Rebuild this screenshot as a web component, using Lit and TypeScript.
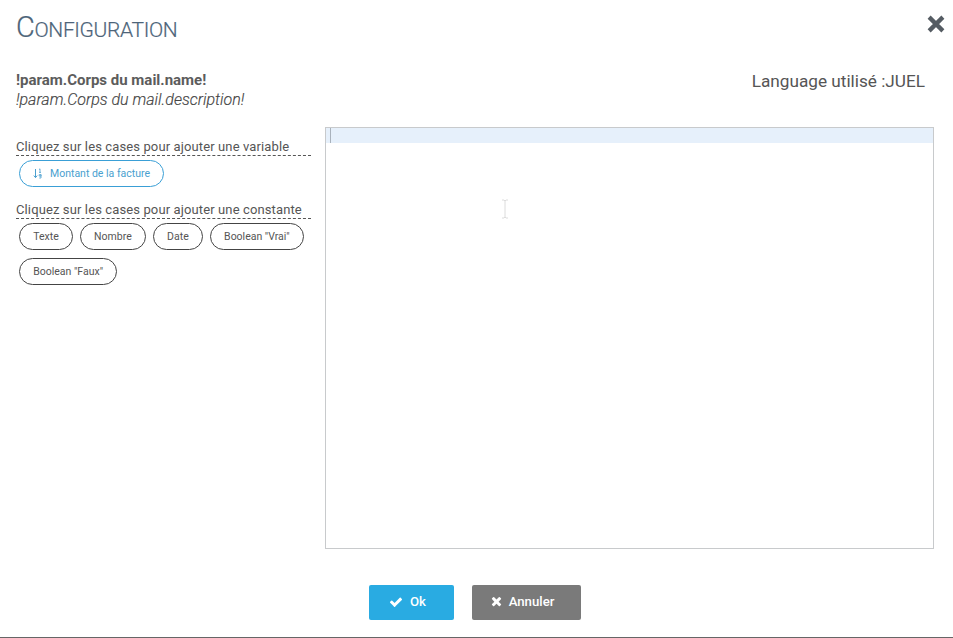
import { LitElement, html, css } from "lit";
import { customElement } from "lit/decorators.js";

@customElement("app-root")
export class AppRoot extends LitElement {
  static styles = css`
    :host {
      display: block;
      width: 953px;
      height: 638px;
      background: #fff;
      font-family: Roboto, "Liberation Sans", sans-serif;
      color: #555;
      overflow: hidden;
    }
    .dialog {
      box-sizing: border-box;
      height: 638px;
      display: flex;
      flex-direction: column;
      border-bottom: 1px solid #666;
    }
    .head {
      display: flex;
      justify-content: space-between;
      align-items: flex-start;
      padding: 11px 7px 0 16px;
      height: 60px;
      box-sizing: border-box;
    }
    .title {
      margin: 0;
      font-size: 21px;
      line-height: 32px;
      font-weight: 300;
      letter-spacing: -0.36px;
      color: #4d6479;
      text-transform: uppercase;
      -webkit-text-stroke: 0.2px #4d6479;
    }
    .title .cap { font-size: 29px; }
    .close { margin: 3px 0 0 0; display: block; }
    .info {
      display: flex;
      justify-content: space-between;
      align-items: flex-start;
      padding: 0 28px 0 16px;
      height: 67px;
      box-sizing: border-box;
    }
    .name { font-size: 15px; font-weight: 700; line-height: 20px; margin-top: 10px; color: #5c5c5c; }
    .desc { font-size: 16px; font-style: italic; font-weight: 300; line-height: 20px; color: #444; -webkit-text-stroke: 0.15px #444; }
    .lang { font-size: 17.2px; line-height: 22px; margin-top: 10px; color: #555; }
    .body {
      display: grid;
      grid-template-columns: 295px 609px;
      column-gap: 14px;
      padding-left: 16px;
    }
    .label {
      font-size: 13px;
      line-height: 17px;
      height: 17px;
      letter-spacing: 0.12px;
      color: #555;
      border-bottom: 1px dashed #555;
      margin: 0;
      padding-top: 11px;
    }
    .label.second { padding-top: 0; margin-top: 14px; }
    .chips {
      display: flex;
      flex-wrap: wrap;
      gap: 8px 7px;
      padding: 4px 0 0 3px;
    }
    .chip {
      box-sizing: border-box;
      height: 27px;
      padding: 0 13.2px;
      border: 1px solid #444;
      border-radius: 14px;
      background: #fff;
      font: 400 10.5px Roboto, sans-serif;
      color: #555;
      display: inline-flex;
      align-items: center;
      gap: 7px;
    }
    .chip.var { border-color: #3a9fd6; color: #4a9fcf; padding: 0 13px; }
    .editor {
      box-sizing: border-box;
      height: 422px;
      margin-top: 0;
      border: 1px solid #c8cacc;
      position: relative;
    }
    .active {
      height: 15px;
      background: #e6f0fb;
      display: flex;
      padding-left: 4px;
    }
    .caret { width: 1px; height: 15px; background: #a9b2bc; }
    .ibeam { position: absolute; left: 175px; top: 71px; display: block; }
    .foot {
      display: flex;
      justify-content: center;
      gap: 18px;
      padding: 36px 0 0 0;
      margin-left: -3px;
    }
    .btn {
      box-sizing: border-box;
      height: 35px;
      border: 0;
      border-radius: 2px;
      color: #fff;
      font: 500 13.2px Roboto, sans-serif;
      display: inline-flex;
      align-items: center;
      justify-content: center;
      gap: 7px;
      padding: 0 8px 2px 0;
    }
    .ok { width: 85px; background: #29abe2; }
    .cancel { width: 109px; background: #7a7a7a; }
  `;

  private x(size: number, color: string) {
    return html`<svg class="close" width=${size} height=${size} viewBox="0 0 16 16" aria-hidden="true"><path d="M2.5 2.5 13.5 13.5M13.5 2.5 2.5 13.5" fill="none" stroke=${color} stroke-width="3.4"/></svg>`;
  }

  render() {
    return html`
      <div class="dialog">
        <div class="head">
          <h1 class="title"><span class="cap">C</span>onfiguration</h1>
          ${this.x(20, "#555c63")}
        </div>
        <div class="info">
          <div>
            <div class="name">!param.Corps du mail.name!</div>
            <div class="desc">!param.Corps du mail.description!</div>
          </div>
          <div class="lang">Language utilisé :JUEL</div>
        </div>
        <div class="body">
          <div>
            <p class="label">Cliquez sur les cases pour ajouter une variable</p>
            <div class="chips">
              <button class="chip var">
                <svg width="10" height="11" viewBox="0 0 10 11" aria-hidden="true">
                  <path d="M2.5 1v8.5M.8 7.6l1.7 2 1.7-2" fill="none" stroke="#4a9fcf" stroke-width="1"/>
                  <path d="M7 .8v3.6M6 1.6l1-.8M6 4.4h2M6.2 6.6h1.8v1.5H6.2zM8 6.6v3.4H6.2" fill="none" stroke="#4a9fcf" stroke-width=".8"/>
                </svg>
                Montant de la facture
              </button>
            </div>
            <p class="label second">Cliquez sur les cases pour ajouter une constante</p>
            <div class="chips">
              <button class="chip">Texte</button>
              <button class="chip">Nombre</button>
              <button class="chip">Date</button>
              <button class="chip">Boolean "Vrai"</button>
              <button class="chip">Boolean "Faux"</button>
            </div>
          </div>
          <div class="editor">
            <div class="active"><div class="caret"></div></div>
            <svg class="ibeam" width="8" height="20" viewBox="0 0 8 20" aria-hidden="true"><path d="M1 1h2l1 1 1-1h2M4 2v16M1 19h2l1-1 1 1h2" fill="none" stroke="#dcdcdc"/></svg>
          </div>
        </div>
        <div class="foot">
          <button class="btn ok">
            <svg width="14" height="14" viewBox="0 0 1792 1792" aria-hidden="true"><path fill="#fff" d="M1671 566q0 40-28 68l-724 724-136 136q-28 28-68 28t-68-28l-136-136-362-362q-28-28-28-68t28-68l136-136q28-28 68-28t68 28l294 295 656-657q28-28 68-28t68 28l136 136q28 28 28 68z"/></svg>
            Ok
          </button>
          <button class="btn cancel">
            <svg width="11" height="14" viewBox="0 0 1408 1792" aria-hidden="true"><path fill="#fff" d="M1298 1214q0 40-28 68l-136 136q-28 28-68 28t-68-28l-294-294-294 294q-28 28-68 28t-68-28l-136-136q-28-28-28-68t28-68l294-294-294-294q-28-28-28-68t28-68l136-136q28-28 68-28t68 28l294 294 294-294q28-28 68-28t68 28l136 136q28 28 28 68t-28 68l-294 294 294 294q28 28 28 68z"/></svg>
            Annuler
          </button>
        </div>
      </div>
    `;
  }
}
